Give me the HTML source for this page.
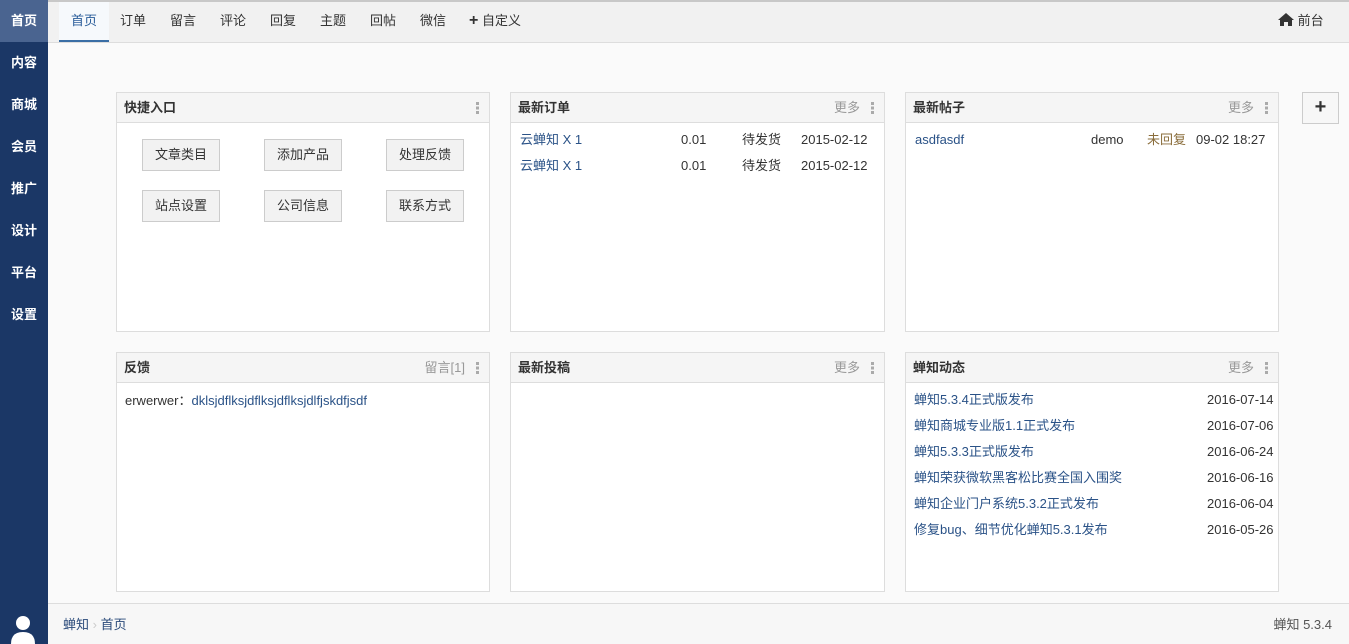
<!DOCTYPE html>
<html><head><meta charset="utf-8"><style>
*{box-sizing:border-box;margin:0;padding:0}
body{width:1349px;height:644px;overflow:hidden;background:#fafafa;font-family:"Liberation Sans","Noto Sans CJK SC",sans-serif;font-size:13px;color:#333;position:relative}
.side{position:absolute;left:0;top:0;width:48px;height:644px;background:#1b3766}
.side div{height:42px;line-height:42px;color:#fff;font-size:13px;font-weight:bold;text-align:center}
.side .on{background:#4a6490}
.top{position:absolute;left:48px;top:0;right:0;height:43px;background:#f1f1f1;border-top:2px solid #c8c8c8;border-bottom:1px solid #ddd}
.top span{position:absolute;top:0;height:40px;line-height:38px;font-size:13px;color:#333}
.top .on{background:#f6f9fc;color:#2a5d9a;border-bottom:2px solid #3a6ea5;padding:0 12px}
.p{position:absolute;background:#fff;border:1px solid #ddd}
.h{height:30px;line-height:29px;background:#f5f5f5;border-bottom:1px solid #ddd;padding-left:7px;font-weight:bold;font-size:13px;color:#333;position:relative}
.h .m{position:absolute;right:24px;top:0;font-weight:normal;color:#999}
.h .d{position:absolute;right:10px;top:9px;width:3px;height:12px;background:linear-gradient(#aaa 0 3px,transparent 3px 4.5px,#aaa 4.5px 7.5px,transparent 7.5px 9px,#aaa 9px 12px)}
.row{position:absolute;left:8px;height:20px;line-height:20px;white-space:nowrap;font-size:13px}
.row span{display:inline-block}
.a{color:#2a5287}
.btn{position:absolute;width:78px;height:32px;border:1px solid #ccc;background:#f2f2f2;text-align:center;line-height:30px;color:#333}
.foot{position:absolute;left:48px;right:0;top:603px;height:41px;border-top:1px solid #ddd;background:#f7f7f7}
</style></head><body>
<div class="side"><div class="on">首页</div><div>内容</div><div>商城</div><div>会员</div><div>推广</div><div>设计</div><div>平台</div><div>设置</div>
<svg style="position:absolute;left:10px;top:614px" width="26" height="30" viewBox="0 0 26 30"><circle cx="13" cy="9" r="7" fill="#fff"/><path d="M1 30 Q1 18 13 18 Q25 18 25 30Z" fill="#fff"/></svg></div>
<div class="top">
<span class="on" style="left:11px">首页</span>
<span style="left:72px">订单</span><span style="left:122px">留言</span><span style="left:172px">评论</span><span style="left:222px">回复</span><span style="left:272px">主题</span><span style="left:322px">回帖</span><span style="left:372px">微信</span>
<span style="left:421px"><b style="font-size:16px">+</b> 自定义</span>
<span style="left:1230px"><svg width="16" height="13" viewBox="0 0 16 13" style="vertical-align:-1px"><path d="M8 0L0 7h2v6h4V9h4v4h4V7h2z" fill="#333"/></svg> 前台</span>
</div>

<div class="p" style="left:116px;top:92px;width:374px;height:240px"><div class="h">快捷入口<i class="d"></i></div>
<div class="btn" style="left:25px;top:46px">文章类目</div><div class="btn" style="left:147px;top:46px">添加产品</div><div class="btn" style="left:269px;top:46px">处理反馈</div>
<div class="btn" style="left:25px;top:97px">站点设置</div><div class="btn" style="left:147px;top:97px">公司信息</div><div class="btn" style="left:269px;top:97px">联系方式</div></div>

<div class="p" style="left:510px;top:92px;width:375px;height:240px"><div class="h">最新订单<span class="m">更多</span><i class="d"></i></div>
<div class="row" style="left:9px;top:37px"><span class="a" style="width:161px">云蝉知 X 1</span><span style="width:61px">0.01</span><span style="width:59px">待发货</span><span>2015-02-12</span></div>
<div class="row" style="left:9px;top:63px"><span class="a" style="width:161px">云蝉知 X 1</span><span style="width:61px">0.01</span><span style="width:59px">待发货</span><span>2015-02-12</span></div></div>

<div class="p" style="left:905px;top:92px;width:374px;height:240px"><div class="h">最新帖子<span class="m">更多</span><i class="d"></i></div>
<div class="row" style="left:9px;top:37px"><span class="a" style="width:176px">asdfasdf</span><span style="width:56px">demo</span><span style="width:49px;color:#8a6d3b">未回复</span><span>09-02 18:27</span></div></div>

<div style="position:absolute;left:1302px;top:92px;width:37px;height:32px;border:1px solid #ccc;background:#f7f7f7;text-align:center;line-height:28px;font-size:20px;font-weight:bold">+</div>

<div class="p" style="left:116px;top:352px;width:374px;height:240px"><div class="h">反馈<span class="m">留言[1]</span><i class="d"></i></div>
<div class="row" style="top:38px">erwerwer：<span class="a">dklsjdflksjdflksjdflksjdlfjskdfjsdf</span></div></div>

<div class="p" style="left:510px;top:352px;width:375px;height:240px"><div class="h">最新投稿<span class="m">更多</span><i class="d"></i></div></div>

<div class="p" style="left:905px;top:352px;width:374px;height:240px"><div class="h">蝉知动态<span class="m">更多</span><i class="d"></i></div>
<div class="row" style="top:37px"><span class="a" style="width:293px">蝉知5.3.4正式版发布</span><span>2016-07-14</span></div>
<div class="row" style="top:63px"><span class="a" style="width:293px">蝉知商城专业版1.1正式发布</span><span>2016-07-06</span></div>
<div class="row" style="top:89px"><span class="a" style="width:293px">蝉知5.3.3正式版发布</span><span>2016-06-24</span></div>
<div class="row" style="top:115px"><span class="a" style="width:293px">蝉知荣获微软黑客松比赛全国入围奖</span><span>2016-06-16</span></div>
<div class="row" style="top:141px"><span class="a" style="width:293px">蝉知企业门户系统5.3.2正式发布</span><span>2016-06-04</span></div>
<div class="row" style="top:167px"><span class="a" style="width:293px">修复bug、细节优化蝉知5.3.1发布</span><span>2016-05-26</span></div></div>

<div class="foot"><div class="row" style="left:15px;top:11px;color:#2a4a7a">蝉知 <span style="color:#ccc">›</span> 首页</div><div class="row" style="left:auto;right:17px;top:11px;color:#555">蝉知 5.3.4</div></div>
</body></html>
